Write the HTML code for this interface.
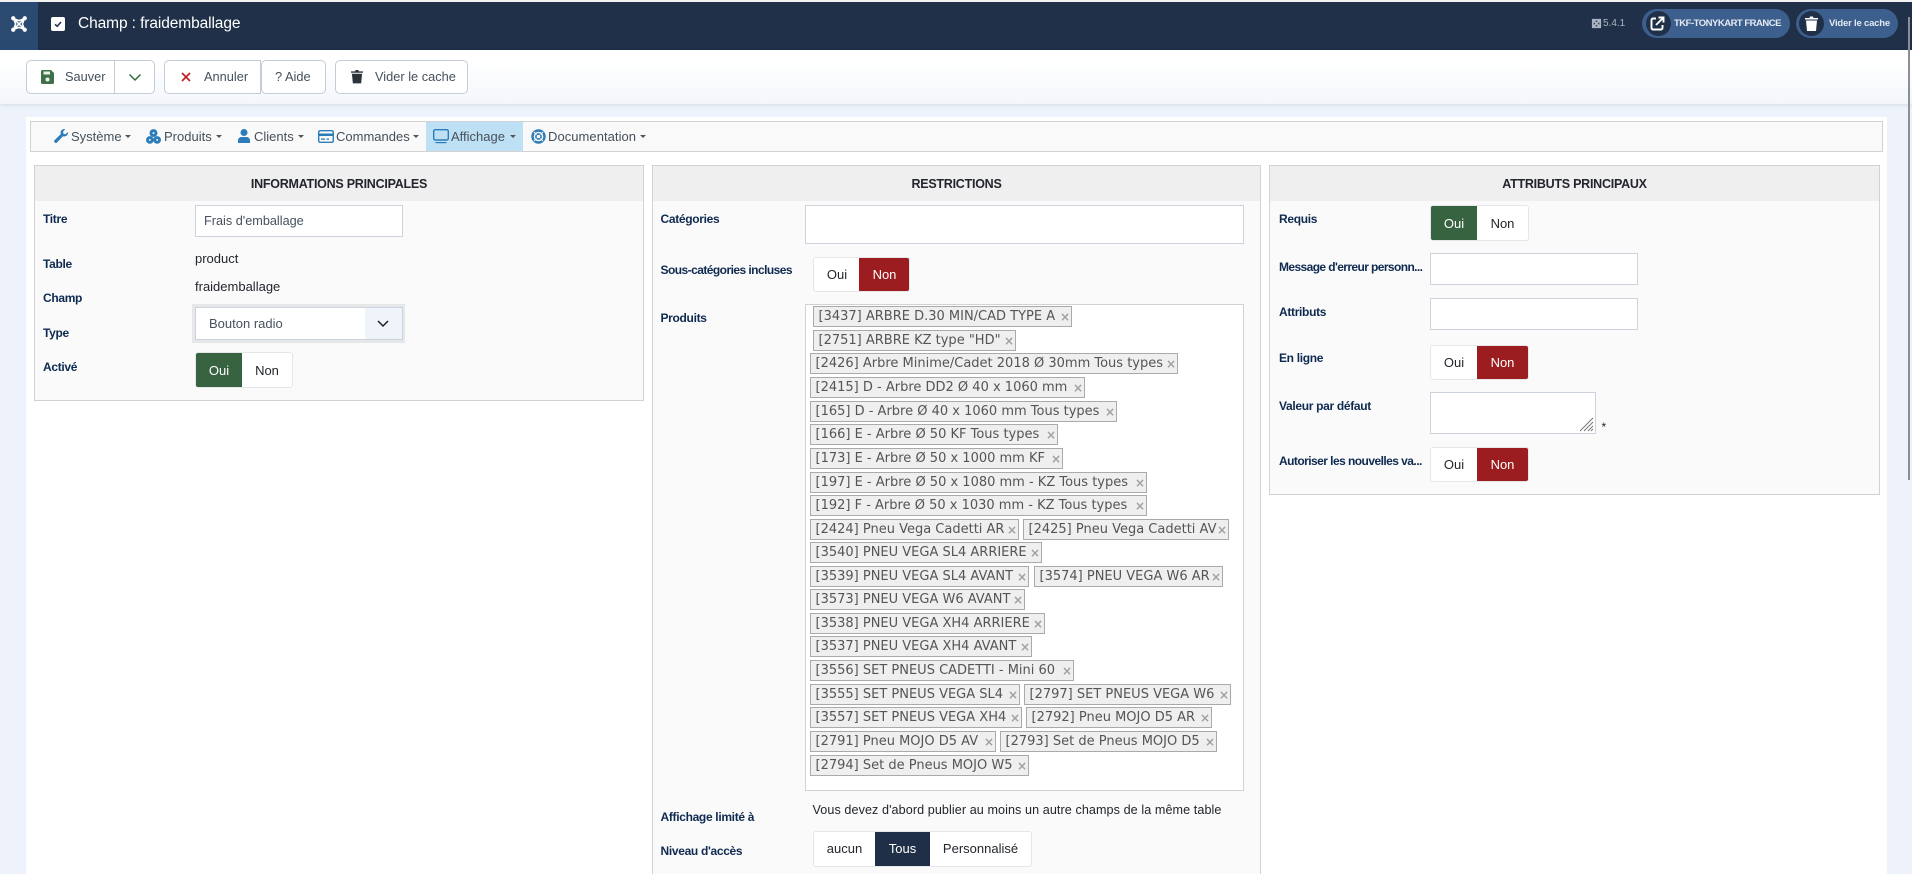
<!DOCTYPE html>
<html lang="fr"><head><meta charset="utf-8"><title>Champ : fraidemballage</title>
<style>
html,body{margin:0;padding:0;width:1912px;height:874px;overflow:hidden;background:#eef3fb}
body{position:relative;font-family:"Liberation Sans",sans-serif;font-size:13px;color:#22262c}
.a,.t,.l,.tg,.i{position:absolute}
.t,.l{white-space:nowrap;line-height:16px;transform:translateY(-50%)}
.l{font-weight:700;font-size:12px;letter-spacing:-.32px;color:#0f2a50;left:0}
.btn{position:absolute;top:60px;height:34px;box-sizing:border-box;border:1px solid #c4ccd8;border-radius:5px;background:#fff}
.bt{font-size:12.8px;color:#44505c;top:77px}
.panel{position:absolute;box-sizing:border-box;border:1px solid #d2d2d2;background:#fafafa}
.ph{position:absolute;left:0;right:0;top:0;height:35px;background:#efefef;text-align:center;font-weight:700;font-size:12.5px;letter-spacing:-.25px;line-height:36px;color:#22262c}
.in{position:absolute;box-sizing:border-box;border:1px solid #ccd3dd;background:#fff}
.sw{position:absolute;box-sizing:border-box;background:#fff;border:1px solid #e4e6ea;border-radius:3px;display:flex;font-size:13px;text-align:center;color:#22262c;overflow:hidden}
.sw span{display:block;height:100%}
.g{background:#386341;color:#fff}.r{background:#9c1d1f;color:#fff}.n{background:#1f2f47;color:#fff}
.tg{box-sizing:border-box;height:21px;border:1px solid #aaa;background:#efefef;font-family:"DejaVu Sans",sans-serif;font-size:13px;line-height:20px;padding-left:4.500px;color:#555;white-space:nowrap;overflow:hidden}
.tg b{position:absolute;right:1px;top:0;color:#a0a0a0;font-size:12px;font-weight:700}
.c{position:absolute;top:135px;width:0;height:0;border-left:3px solid transparent;border-right:3px solid transparent;border-top:3px solid #555}
.nt{font-size:13px;color:#46505a;top:137px}
.p{font-size:9.5px;font-weight:700;color:#e4eaf3;top:24px}
</style></head><body>

<!-- top bar -->
<div class="a" style="left:0;top:0;width:1912px;height:2px;background:#f2f2f2"></div>
<div class="a" style="left:0;top:2px;width:1912px;height:48px;background:#1f3048"></div>
<div class="a" style="left:0;top:2px;width:38px;height:48px;background:#2b4a72"></div>
<svg class="a" style="left:11px;top:16px" width="16" height="16" viewBox="0 0 18 18" fill="none" stroke="#fff" stroke-width="1.800" stroke-linecap="round"><path d="M3 3L15 15M15 3L3 15M3 3L9 5.200L15 3L12.800 9L15 15L9 12.800L3 15L5.200 9Z"/><circle cx="2.500" cy="2.500" r="1.500" fill="#fff"/><circle cx="15.500" cy="2.500" r="1.500" fill="#fff"/><circle cx="2.500" cy="15.500" r="1.500" fill="#fff"/><circle cx="15.500" cy="15.500" r="1.500" fill="#fff"/></svg>
<svg class="a" style="left:51px;top:17px" width="14" height="14" viewBox="0 0 14 14"><rect width="14" height="14" rx="2" fill="#fff"/><path d="M4 7.300L6.200 9.300L10 5" fill="none" stroke="#1f3048" stroke-width="1.500"/></svg>
<div class="t" style="left:78px;top:24px;font-size:15.500px;color:#fff;letter-spacing:-.1px">Champ : fraidemballage</div>

<svg class="a" style="left:1591px;top:18px" width="11" height="11" viewBox="0 0 18 18" fill="none" stroke="#aab4c2" stroke-width="3"><path d="M3 3L15 15M15 3L3 15M3 3H15V15H3Z"/></svg>
<div class="t" style="left:1603px;top:24px;font-size:10px;color:#aab4c2">5.4.1</div>
<div class="a" style="left:1642px;top:9px;width:148px;height:29px;border-radius:15px;background:#3c5f8d"></div>
<div class="a" style="left:1646px;top:11px;width:25px;height:25px;border-radius:50%;background:#1f3048"></div>
<svg class="a" style="left:1650px;top:16px" width="15" height="15" viewBox="0 0 15 15" fill="none" stroke="#fff" stroke-width="1.900"><path d="M6 2.500H3A1.500 1.500 0 0 0 1.500 4V12A1.500 1.500 0 0 0 3 13.500H11A1.500 1.500 0 0 0 12.500 12V9M6 9L13 2M8.500 1.500H13.500V6.500"/></svg>
<div class="t p" style="left:1674px;letter-spacing:-.5px">TKF-TONYKART FRANCE</div>
<div class="a" style="left:1796px;top:9px;width:102px;height:29px;border-radius:15px;background:#3c5f8d"></div>
<div class="a" style="left:1799px;top:11px;width:25px;height:25px;border-radius:50%;background:#1f3048"></div>
<svg class="a" style="left:1805px;top:16px" width="13" height="15" viewBox="0 0 13 15" fill="#fff"><path d="M0 2H4.500L5 .5H8L8.500 2H13V3.500H0ZM1 4.500H12L11 15H2Z"/></svg>
<div class="t p" style="left:1829px;letter-spacing:-.2px">Vider le cache</div>

<!-- toolbar -->
<div class="a" style="left:0;top:50px;width:1912px;height:54px;background:linear-gradient(#fff 20%,#f3f6fb);box-shadow:0 1px 4px rgba(30,50,80,.12)"></div>
<div class="btn" style="left:26px;width:89px;border-radius:5px 0 0 5px"></div>
<div class="btn" style="left:114px;width:41px;border-radius:0 5px 5px 0"></div>
<svg class="a" style="left:41px;top:70px" width="13" height="14" viewBox="0 0 13 14"><path d="M1.500 0H10L13 3V12.500A1.500 1.500 0 0 1 11.500 14H1.500A1.500 1.500 0 0 1 0 12.500V1.500A1.500 1.500 0 0 1 1.500 0Z" fill="#3f7049"/><rect x="2.500" y="1.500" width="6.500" height="3" fill="#e9efe9"/><circle cx="6.500" cy="9.500" r="2" fill="#e9efe9"/></svg>
<div class="t bt" style="left:65px">Sauver</div>
<svg class="a" style="left:128px;top:73px" width="14" height="9" viewBox="0 0 14 9" fill="none" stroke="#2f6b3e" stroke-width="1.500"><path d="M1.500 1.500L7 7L12.500 1.500"/></svg>
<div class="btn" style="left:164px;width:97px;border-radius:5px 0 0 5px"></div>
<svg class="a" style="left:181px;top:72px" width="10" height="10" viewBox="0 0 10 10" stroke="#c4202a" stroke-width="1.700"><path d="M1 1L9 9M9 1L1 9"/></svg>
<div class="t bt" style="left:204px">Annuler</div>
<div class="btn" style="left:261px;width:65px;border-radius:5px"></div>
<div class="t bt" style="left:275px">? Aide</div>
<div class="btn" style="left:335px;width:133px"></div>
<svg class="a" style="left:351px;top:69px" width="12" height="15" viewBox="0 0 13 15" fill="#2d333a"><path d="M0 2H4.500L5 .5H8L8.500 2H13V3.500H0ZM1 4.500H12L11 15H2Z"/></svg>
<div class="t bt" style="left:375px">Vider le cache</div>

<!-- content -->
<div class="a" style="left:26px;top:117px;width:1861px;height:757px;background:#fff"></div>
<div class="a" style="left:30px;top:121px;width:1853px;height:31px;box-sizing:border-box;border:1px solid #d2d2d2;background:#f9f9f9"></div>
<div class="a" style="left:426px;top:122px;width:97px;height:29px;background:#bde0f4"></div>

<svg class="a" style="left:54px;top:129px" width="14" height="14" viewBox="0 0 14 14" fill="#2b7cb8"><path d="M14 3L11.500 5.300L9.500 4.800L9 2.800L11.300.3C9.200-.4 6.800.8 6.600 3.300C6.500 4 6.700 4.700 6.800 5.100L.6 11.100A1.700 1.700 0 0 0 3 13.500L9 7.300C11.700 8 14.500 6 14 3Z"/></svg>
<div class="t nt" style="left:71px">Système</div><i class="c" style="left:125px"></i>
<svg class="a" style="left:145.500px;top:128.500px" width="15" height="15" viewBox="0 0 14 14" fill="#2b7cb8"><circle cx="7" cy="3.800" r="3.700"/><circle cx="3.600" cy="10.200" r="3.600"/><circle cx="10.400" cy="10.200" r="3.600"/><circle cx="7" cy="3.800" r=".9" fill="#f9f9f9"/><circle cx="3.600" cy="10.200" r=".9" fill="#f9f9f9"/><circle cx="10.400" cy="10.200" r=".9" fill="#f9f9f9"/></svg>
<div class="t nt" style="left:164px">Produits</div><i class="c" style="left:216px"></i>
<svg class="a" style="left:238px;top:129px" width="12" height="14" viewBox="0 0 12 14" fill="#2b7cb8"><circle cx="6" cy="3.500" r="3.500"/><path d="M0 14V11.500C0 9 2 8 3.500 8H8.500C10 8 12 9 12 11.500V14Z"/></svg>
<div class="t nt" style="left:254px">Clients</div><i class="c" style="left:298px"></i>
<svg class="a" style="left:318px;top:130px" width="16" height="13" viewBox="0 0 16 13"><rect x=".7" y=".7" width="14.600" height="11.600" rx="1.500" fill="none" stroke="#2b7cb8" stroke-width="1.400"/><rect x="1" y="3.500" width="14" height="2.500" fill="#2b7cb8"/><rect x="3" y="8.500" width="4" height="1.300" fill="#2b7cb8"/><rect x="8.500" y="8.500" width="2.500" height="1.300" fill="#2b7cb8"/></svg>
<div class="t nt" style="left:336px">Commandes</div><i class="c" style="left:413px"></i>
<svg class="a" style="left:433px;top:129px" width="16" height="15" viewBox="0 0 16 15"><rect x=".7" y=".7" width="14.600" height="10.300" rx="1.500" fill="none" stroke="#2b7cb8" stroke-width="1.400"/><rect x="2.500" y="13" width="11" height="1.200" fill="#2b7cb8"/></svg>
<div class="t nt" style="left:451px">Affichage</div><i class="c" style="left:510px"></i>
<svg class="a" style="left:531px;top:129px" width="15" height="15" viewBox="0 0 15 15" fill="none" stroke="#2b7cb8"><circle cx="7.500" cy="7.500" r="6" stroke-width="2.400"/><circle cx="7.500" cy="7.500" r="2.600" stroke-width="1.600"/><path d="M3 3L5.500 5.500M12 3L9.500 5.500M3 12L5.500 9.500M12 12L9.500 9.500" stroke="#f9f9f9" stroke-width="1"/></svg>
<div class="t nt" style="left:548px;letter-spacing:.05px">Documentation</div><i class="c" style="left:640px"></i>

<!-- panel 1 -->
<div class="panel" style="left:34px;top:165px;width:610px;height:236px"><div class="ph">INFORMATIONS PRINCIPALES</div></div>
<div class="l" style="left:43px;top:219px">Titre</div>
<div class="in" style="left:195px;top:205px;width:208px;height:32px"></div>
<div class="t" style="left:204px;top:221px;font-size:12.700px;color:#47525e">Frais d'emballage</div>
<div class="l" style="left:43px;top:264px">Table</div>
<div class="t" style="left:195px;top:259px">product</div>
<div class="l" style="left:43px;top:298px">Champ</div>
<div class="t" style="left:195px;top:287px">fraidemballage</div>
<div class="l" style="left:43px;top:333px">Type</div>
<div class="a" style="left:192px;top:304px;width:213px;height:39px;background:#e6e7e9"></div>
<div class="in" style="left:195px;top:307px;width:208px;height:33px"></div>
<div class="a" style="left:365px;top:308px;width:37px;height:31px;background:#eff4fb"></div>
<svg class="a" style="left:377px;top:320px" width="12" height="8" viewBox="0 0 12 8" fill="none" stroke="#1a1f26" stroke-width="1.500"><path d="M1 1L6 6L11 1"/></svg>
<div class="t" style="left:209px;top:324px;color:#47525e">Bouton radio</div>
<div class="l" style="left:43px;top:367px">Activé</div>
<div class="sw" style="left:195px;top:352px;width:98px;height:36px;line-height:35px"><span class="g" style="width:46px">Oui</span><span style="width:50px">Non</span></div>

<!-- panel 2 -->
<div class="panel" style="left:652px;top:165px;width:609px;height:720px"><div class="ph">RESTRICTIONS</div></div>
<div class="l" style="left:660.500px;top:219px">Catégories</div>
<div class="in" style="left:805px;top:205px;width:439px;height:39px"></div>
<div class="l" style="left:660.500px;top:270px;letter-spacing:-.55px">Sous-catégories incluses</div>
<div class="sw" style="left:813px;top:257px;width:97px;height:35px;line-height:34px"><span style="width:46px;padding-right:0">Oui</span><span class="r" style="width:49px;margin-left:-1px;padding-left:1px;box-sizing:content-box">Non</span></div>
<div class="l" style="left:660.500px;top:318px">Produits</div>
<div class="in" style="left:805px;top:304px;width:439px;height:487px;border-color:#d2d2d2"></div>

<div class="tg" style="left:813px;top:306px;width:259px">[3437] ARBRE D.30 MIN/CAD TYPE A<b>×</b></div>
<div class="tg" style="left:813px;top:330px;width:203px">[2751] ARBRE KZ type "HD"<b>×</b></div>
<div class="tg" style="left:810px;top:353px;width:368px">[2426] Arbre Minime/Cadet 2018 Ø 30mm Tous types<b>×</b></div>
<div class="tg" style="left:810px;top:377px;width:275px">[2415] D - Arbre DD2 Ø 40 x 1060 mm<b>×</b></div>
<div class="tg" style="left:810px;top:401px;width:307px">[165] D - Arbre Ø 40 x 1060 mm Tous types<b>×</b></div>
<div class="tg" style="left:810px;top:424px;width:248px">[166] E - Arbre Ø 50 KF Tous types<b>×</b></div>
<div class="tg" style="left:810px;top:448px;width:253px">[173] E - Arbre Ø 50 x 1000 mm KF<b>×</b></div>
<div class="tg" style="left:810px;top:472px;width:337px">[197] E - Arbre Ø 50 x 1080 mm - KZ Tous types<b>×</b></div>
<div class="tg" style="left:810px;top:495px;width:337px">[192] F - Arbre Ø 50 x 1030 mm - KZ Tous types<b>×</b></div>
<div class="tg" style="left:810px;top:519px;width:209px">[2424] Pneu Vega Cadetti AR<b>×</b></div>
<div class="tg" style="left:1023px;top:519px;width:206px">[2425] Pneu Vega Cadetti AV<b>×</b></div>
<div class="tg" style="left:810px;top:542px;width:232px">[3540] PNEU VEGA SL4 ARRIERE<b>×</b></div>
<div class="tg" style="left:810px;top:566px;width:219px">[3539] PNEU VEGA SL4 AVANT<b>×</b></div>
<div class="tg" style="left:1034px;top:566px;width:189px">[3574] PNEU VEGA W6 AR<b>×</b></div>
<div class="tg" style="left:810px;top:589px;width:215px">[3573] PNEU VEGA W6 AVANT<b>×</b></div>
<div class="tg" style="left:810px;top:613px;width:235px">[3538] PNEU VEGA XH4 ARRIERE<b>×</b></div>
<div class="tg" style="left:810px;top:636px;width:222px">[3537] PNEU VEGA XH4 AVANT<b>×</b></div>
<div class="tg" style="left:810px;top:660px;width:264px">[3556] SET PNEUS CADETTI - Mini 60<b>×</b></div>
<div class="tg" style="left:810px;top:684px;width:210px">[3555] SET PNEUS VEGA SL4<b>×</b></div>
<div class="tg" style="left:1024px;top:684px;width:207px">[2797] SET PNEUS VEGA W6<b>×</b></div>
<div class="tg" style="left:810px;top:707px;width:212px">[3557] SET PNEUS VEGA XH4<b>×</b></div>
<div class="tg" style="left:1026px;top:707px;width:186px">[2792] Pneu MOJO D5 AR<b>×</b></div>
<div class="tg" style="left:810px;top:731px;width:186px">[2791] Pneu MOJO D5 AV<b>×</b></div>
<div class="tg" style="left:1000px;top:731px;width:217px">[2793] Set de Pneus MOJO D5<b>×</b></div>
<div class="tg" style="left:810px;top:755px;width:219px">[2794] Set de Pneus MOJO W5<b>×</b></div>

<div class="l" style="left:660.500px;top:817px">Affichage limité à</div>
<div class="t" style="left:812.500px;top:810px;font-size:12.600px;letter-spacing:.08px">Vous devez d'abord publier au moins un autre champs de la même table</div>
<div class="l" style="left:660.500px;top:851px">Niveau d'accès</div>
<div class="sw" style="left:813px;top:831px;width:219px;height:36px;line-height:34px"><span style="width:61px">aucun</span><span class="n" style="width:55px">Tous</span><span style="width:101px">Personnalisé</span></div>

<!-- panel 3 -->
<div class="panel" style="left:1269px;top:165px;width:611px;height:330px"><div class="ph">ATTRIBUTS PRINCIPAUX</div></div>
<div class="l" style="left:1279px;top:219px">Requis</div>
<div class="sw" style="left:1430px;top:205px;width:99px;height:36px;line-height:35px"><span class="g" style="width:46px">Oui</span><span style="width:51px">Non</span></div>
<div class="l" style="left:1279px;top:267px;letter-spacing:-.6px">Message d'erreur personn...</div>
<div class="in" style="left:1430px;top:253px;width:208px;height:32px"></div>
<div class="l" style="left:1279px;top:312px">Attributs</div>
<div class="in" style="left:1430px;top:298px;width:208px;height:32px"></div>
<div class="l" style="left:1279px;top:358px">En ligne</div>
<div class="sw" style="left:1430px;top:345px;width:99px;height:35px;line-height:34px"><span style="width:46px">Oui</span><span class="r" style="width:51px">Non</span></div>
<div class="l" style="left:1279px;top:406px">Valeur par défaut</div>
<div class="in" style="left:1430px;top:392px;width:166px;height:42px"></div>
<svg class="a" style="left:1579px;top:417px" width="15" height="15" viewBox="0 0 15 15" stroke="#777" stroke-width="1"><path d="M1 14L14 1M5 14L14 5M9 14L14 9M12 14L14 12"/></svg>
<div class="t" style="left:1601.500px;top:427px;font-size:12px">*</div>
<div class="l" style="left:1279px;top:461px;letter-spacing:-.55px">Autoriser les nouvelles va...</div>
<div class="sw" style="left:1430px;top:447px;width:99px;height:35px;line-height:34px"><span style="width:46px">Oui</span><span class="r" style="width:51px">Non</span></div>

<!-- scrollbar -->
<div class="a" style="left:1908px;top:17px;width:2px;height:463px;background:#8b8f95"></div>
</body></html>
